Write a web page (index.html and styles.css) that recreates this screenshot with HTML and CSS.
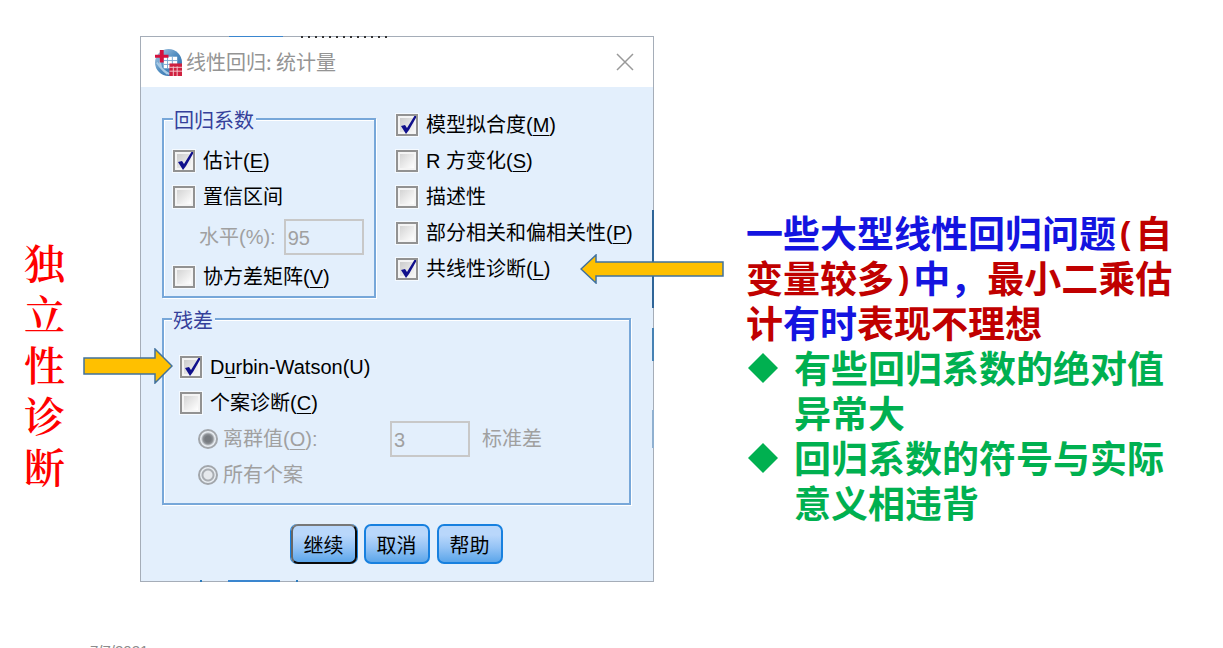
FILE: index.html
```html
<!DOCTYPE html>
<html lang="zh-CN">
<head>
<meta charset="utf-8">
<title>线性回归: 统计量</title>
<link rel="stylesheet" href="styles.css">
</head>
<body>
<main class="slide">
  <h2 class="side-title">独立性诊断</h2>

  <section class="dialog" aria-labelledby="dialog-title">
    <header class="titlebar">
      <svg class="app-icon" viewBox="0 0 28 28" aria-hidden="true">
        <defs>
          <linearGradient id="globe" x1="0" y1="0" x2="1" y2="1">
            <stop offset="0" stop-color="#b5cfe6"/>
            <stop offset="0.5" stop-color="#4f8cc0"/>
            <stop offset="1" stop-color="#2b6ba8"/>
          </linearGradient>
        </defs>
        <circle cx="14" cy="14" r="14" fill="url(#globe)"/>
        <path d="M2 14c3 5 7 9 13 12M6 10c-2 6 1 12 7 16" fill="none" stroke="#a9cbe6" stroke-width="2"/>
        <path d="M9 8h14v12H9z" fill="#fff"/>
        <path d="M9 12h14M9 16h14M13 8v12M18 8v12" stroke="#78a5d0" fill="none"/>
        <path d="M5 1h4v5h5v3H9v5H5V9H0V6h5z" fill="#d5103c"/>
        <path d="M15 15h13v13H15z" fill="#cf2140"/>
        <path d="M15 19h13M15 23h13M19 18v10M23 18v10" stroke="#f4c5cc" fill="none"/>
      </svg>
      <h1 class="title" id="dialog-title">线性回归: 统计量</h1>
      <button class="close" type="button" aria-label="关闭">
        <svg viewBox="0 0 18 18" aria-hidden="true"><path d="M1 1l16 16M17 1L1 17" stroke="#999" stroke-width="1.5" fill="none"/></svg>
      </button>
    </header>

    <form class="body">
      <div class="columns">
        <fieldset class="group">
          <legend>回归系数</legend>
          <label class="row"><input type="checkbox" checked><span>估计(<u>E</u>)</span></label>
          <label class="row"><input type="checkbox"><span>置信区间</span></label>
          <div class="row level">
            <label for="level">水平(%):</label>
            <input class="number" id="level" type="text" value="95" disabled>
          </div>
          <label class="row"><input type="checkbox"><span>协方差矩阵(<u>V</u>)</span></label>
        </fieldset>
        <div class="options">
          <label class="row"><input type="checkbox" checked><span>模型拟合度(<u>M</u>)</span></label>
          <label class="row"><input type="checkbox"><span>R 方变化(<u>S</u>)</span></label>
          <label class="row"><input type="checkbox"><span>描述性</span></label>
          <label class="row"><input type="checkbox"><span>部分相关和偏相关性(<u>P</u>)</span></label>
          <label class="row"><input type="checkbox" checked><span>共线性诊断(<u>L</u>)</span></label>
        </div>
      </div>

      <fieldset class="group residuals">
        <legend>残差</legend>
        <label class="row"><input type="checkbox" checked><span>D<u>u</u>rbin-Watson(U)</span></label>
        <label class="row"><input type="checkbox"><span>个案诊断(<u>C</u>)</span></label>
        <div class="row cases">
          <label class="choice"><input type="radio" name="cases" checked disabled><span>离群值(<u>O</u>):</span></label>
          <input class="number" id="deviations" type="text" value="3" disabled>
          <label for="deviations">标准差</label>
        </div>
        <div class="row cases">
          <label class="choice"><input type="radio" name="cases" disabled><span>所有个案</span></label>
        </div>
      </fieldset>

      <div class="actions">
        <button class="action default" type="button">继续</button>
        <button class="action" type="button">取消</button>
        <button class="action" type="button">帮助</button>
      </div>
    </form>

    <svg class="arrow arrow-right" viewBox="0 0 90 36" aria-hidden="true"><path d="M1 10h71V1l17 17-17 17v-9H1z"/></svg>
    <svg class="arrow arrow-left" viewBox="0 0 145 30" aria-hidden="true"><path d="M143 8H16V1L1 15l15 14v-7h127z"/></svg>
  </section>

  <section class="note">
    <p>一些大型线性回归问题<em><span class="paren">(</span>自变量较多<span class="paren">)</span></em>中，<em>最小二乘估计</em>有时<em>表现不理想</em></p>
    <ul>
      <li><svg class="bullet" viewBox="0 0 30 30" aria-hidden="true"><path d="M15 0l15 15-15 15L0 15z"/></svg><span>有些回归系数的绝对值异常大</span></li>
      <li><svg class="bullet" viewBox="0 0 30 30" aria-hidden="true"><path d="M15 0l15 15-15 15L0 15z"/></svg><span>回归系数的符号与实际意义相违背</span></li>
    </ul>
  </section>
</main>
<footer class="date">7/7/2021</footer>
</body>
</html>
```

FILE: styles.css
```css
* {
  box-sizing: border-box;
}

body {
  margin: 0;
  height: 100vh;
  overflow: hidden;
  background: #fff;
  color: #000;
  font-family: "Liberation Sans", "Noto Sans CJK SC", sans-serif;
  font-size: 20px;
  line-height: 24px;
}

.slide {
  display: grid;
  grid-template-columns: 116px minmax(0, 514px) minmax(0, 1fr);
  align-items: start;
  padding: 36px 40px 0 24px;
}

.side-title {
  width: 41px;
  margin: 204px 0 0;
  color: #f00;
  font-family: "Liberation Serif", "Noto Serif CJK SC", "Noto Sans CJK SC", serif;
  font-size: 41px;
  font-weight: 600;
  line-height: 51px;
  word-break: break-all;
}

.dialog {
  position: relative;
  border: 1px solid #a5adb8;
  background: #e3effc;
}

/* Slivers of the window behind that show along the dialog's edge */
.dialog::before {
  content: "";
  position: absolute;
  inset: -1px;
  pointer-events: none;
  background:
    linear-gradient(#2f6598, #2f6598) right 174px / 2px 98px no-repeat,
    linear-gradient(#4682b4, #4682b4) right 292px / 2px 33px no-repeat,
    linear-gradient(#8fb0d0, #8fb0d0) right 374px / 2px 38px no-repeat,
    linear-gradient(90deg, #2b7bbd 0 2px, transparent 2px 28px, #3a86cf 28px 80px, transparent 80px 96px, #2b7bbd 96px) 60px bottom / 98px 2px no-repeat,
    repeating-linear-gradient(90deg, #333 0 2px, transparent 2px 7px) 161px top / 88px 2px no-repeat,
    linear-gradient(#3a86cf, #3a86cf) 89px top / 54px 1px no-repeat;
}

.titlebar {
  display: flex;
  align-items: center;
  gap: 4px;
  height: 50px;
  padding: 0 18px 0 14px;
  background: #fff;
}

.app-icon {
  width: 27px;
  height: 27px;
}

.title {
  flex: 1;
  margin: 0;
  color: #949494;
  font-family: "Noto Sans CJK SC", sans-serif;
  font-size: 20px;
  font-weight: 400;
  line-height: 24px;
}

.close {
  width: 20px;
  height: 20px;
  padding: 1px;
  border: 0;
  background: none;
}

.close svg {
  display: block;
}

.body {
  padding: 18px 22px 17px 21px;
}

.columns {
  display: grid;
  grid-template-columns: minmax(0, 214fr) minmax(0, 235fr);
  align-items: start;
  gap: 20px;
}

.options {
  padding-top: 2px;
}

.group {
  min-width: 0;
  margin: 0;
  padding: 10px 8px 1px 9px;
  border: 2px solid #77a7d9;
  box-shadow: inset 1px 1px #fff, 1px 1px #fff;
}

.group legend {
  padding: 4px 2px 0 1px;
  background: #e3effc;
  color: #35409a;
}

.residuals {
  margin-top: 7px;
  padding: 16px 16px 10px;
}

.residuals legend {
  margin-left: -8px;
}

.row {
  display: flex;
  align-items: center;
  gap: 8px;
  height: 36px;
  white-space: nowrap;
}

.row u {
  text-underline-offset: 3px;
  text-decoration-thickness: 1px;
}

.level {
  height: 44px;
  padding-left: 26px;
  color: #a0a0a0;
}

.cases {
  padding-left: 18px;
  gap: 12px;
  color: #a0a0a0;
}

.choice {
  display: flex;
  align-items: center;
  gap: 5px;
  width: 180px;
}

input[type="checkbox"] {
  appearance: none;
  flex: none;
  width: 22px;
  height: 22px;
  margin: 0;
  border: 2px solid #929292;
  outline: 1px solid #f5faff;
  background: linear-gradient(135deg, #d4d4d4, #fff) content-box, #f4f4f4;
  padding: 2px;
}

input[type="checkbox"]:checked {
  background:
    url("data:image/svg+xml,%3Csvg xmlns='http://www.w3.org/2000/svg' viewBox='0 0 20 20'%3E%3Cpath d='M4 11l4-1 2 3L18 0l2 1-8 14-3 4z' fill='%2310108c'/%3E%3C/svg%3E") center / 20px 20px no-repeat border-box,
    linear-gradient(135deg, #ccc, #f6f6f6) content-box,
    #f4f4f4;
}

input[type="radio"] {
  appearance: none;
  flex: none;
  width: 20px;
  height: 20px;
  margin: 0;
  border: 2px solid #a2a6ab;
  border-radius: 50%;
  background: radial-gradient(circle, #e6e9ed 0 4px, #a9adb2 5px 6px, #e8edf2 7px);
}

input[type="radio"]:checked {
  background: radial-gradient(circle, #777b80 0 3px, #8f9398 5px, #e8edf2 7px);
}

.number {
  width: 80px;
  height: 36px;
  padding: 2px 2px 0;
  border: 2px solid #c8c8c8;
  background: transparent;
  color: #a0a0a0;
  font: inherit;
}

.actions {
  display: flex;
  justify-content: center;
  gap: 7px;
  margin-top: 19px;
}

.action {
  width: 66px;
  height: 40px;
  padding: 4px 0 0;
  border: 2px solid #1780df;
  border-radius: 7px;
  background: linear-gradient(#b9d7fb 0 25%, #94c3f5 60%, #5ca6ea);
  color: #000;
  font: inherit;
}

.action.default {
  border-color: #777 #0a0a0a #0a0a0a #666;
  box-shadow: -1px 0 #1780df, 1px 0 #1780df;
}

.arrow {
  position: absolute;
  fill: #ffc000;
  stroke: #41719c;
  stroke-width: 1.5;
}

.arrow-right {
  top: 311px;
  left: -58px;
  width: 90px;
}

.arrow-left {
  top: 217px;
  right: -72px;
  width: 145px;
}

.note {
  margin: 174px 0 0 92px;
  color: #1414e0;
  font-family: "Noto Sans CJK SC", sans-serif;
  font-size: 37px;
  font-weight: 700;
  line-height: 45px;
}

.note p,
.note ul {
  margin: 0;
  padding: 0;
}

.note em {
  color: #c00000;
  font-style: normal;
}

.paren {
  font-family: "Liberation Mono", monospace;
  font-size: 32px;
  line-height: 1;
  vertical-align: 4px;
}

.note li {
  display: flex;
  gap: 16px;
  padding-left: 2px;
  color: #00b050;
  list-style: none;
}

.bullet {
  flex: none;
  width: 30px;
  height: 30px;
  margin-top: 8px;
  fill: #00b050;
}

.date {
  padding: 59px 90px 0;
  color: #8b8b8b;
  font-size: 15px;
  line-height: 20px;
}
```
